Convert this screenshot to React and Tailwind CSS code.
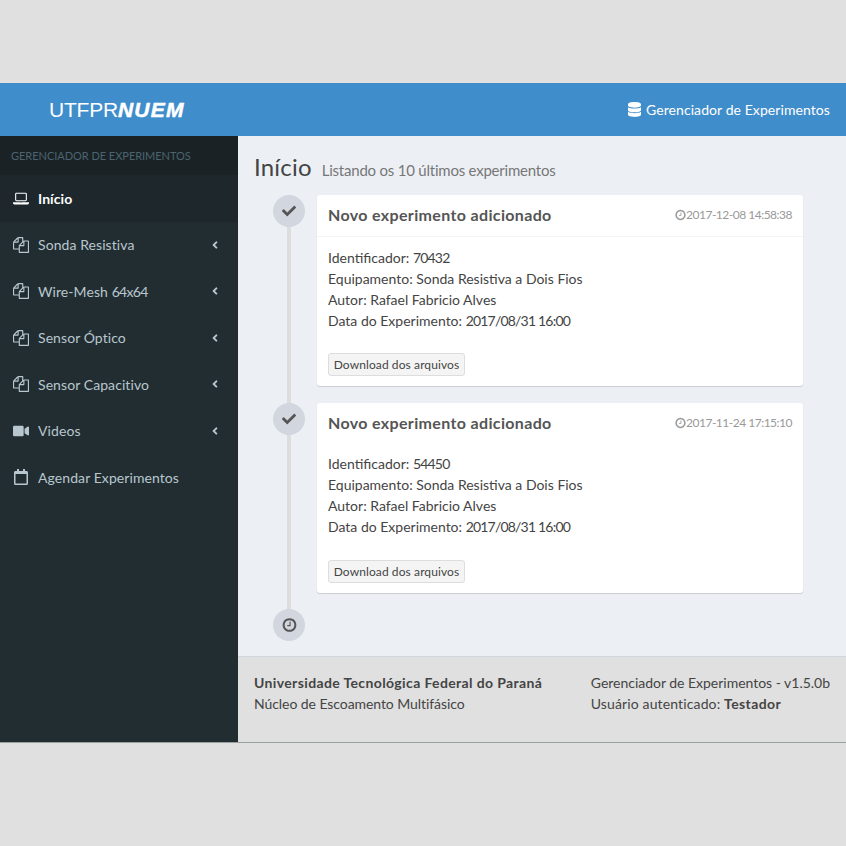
import React from "react";
import { FaVideo, FaRegCalendar, FaDatabase, FaCheck, FaAngleLeft } from "react-icons/fa";

const Files = ({ className }) => (
  <svg viewBox="0 0 1792 1792" fill="currentColor" className={className}>
    <path d="M1696 384q40 0 68 28t28 68v1216q0 40-28 68t-68 28h-960q-40 0-68-28t-28-68v-288h-544q-40 0-68-28t-28-68v-672q0-40 20-88t48-76l408-408q28-28 76-48t88-20h416q40 0 68 28t28 68v328q68-40 128-40h416zm-544 213l-299 299h299v-299zm-640-384l-299 299h299v-299zm196 647l316-316v-416h-384v416q0 40-28 68t-68 28h-416v640h512v-256q0-40 20-88t48-76zm956 804v-1152h-384v416q0 40-28 68t-68 28h-416v640h896z" />
  </svg>
);

const Laptop = ({ className }) => (
  <svg viewBox="0 0 1920 1792" fill="currentColor" className={className}>
    <path d="M416 1280q-66 0-113-47t-47-113v-704q0-66 47-113t113-47h1088q66 0 113 47t47 113v704q0 66-47 113t-113 47h-1088zm-32-864v704q0 13 9.5 22.5t22.5 9.5h1088q13 0 22.5-9.5t9.5-22.5v-704q0-13-9.5-22.5t-22.5-9.5h-1088q-13 0-22.5 9.5t-9.5 22.5zm1376 992h160v96q0 66-47 113t-113 47h-1600q-66 0-113-47t-47-113v-96h1760zm-720 96q16 0 16-16t-16-16h-160q-16 0-16 16t16 16h160z" />
  </svg>
);

const Clock = ({ className }) => (
  <svg viewBox="0 0 1536 1792" fill="currentColor" className={className}>
    <path d="M896 544v448q0 14-9 23t-23 9h-320q-14 0-23-9t-9-23v-64q0-14 9-23t23-9h224v-352q0-14 9-23t23-9h64q14 0 23 9t9 23zm416 352q0-148-73-273t-198-198-273-73-273 73-198 198-73 273 73 273 198 198 273 73 273-73 198-198 73-273zm224 0q0 209-103 385.5t-279.5 279.5-385.5 103-385.5-103-279.5-279.5-103-385.5 103-385.5 279.5-279.5 385.5-103 385.5 103 279.5 279.5 103 385.5z" />
  </svg>
);

function Item({ icon: Icon, label, num, active, arrow }) {
  return (
    <div className={`flex h-[46.5px] items-center pl-[13px] pr-[19px] ${active ? "bg-[#1e282c] text-white font-bold" : "text-[#b8c7ce]"}`}>
      <Icon className="w-[16px] h-[16px] shrink-0" />
      <span className="ml-[9px] text-[14px] tracking-[0.08px] flex-1">
        {label}
        {num && <span className="tracking-[-0.7px]">{num}</span>}
      </span>
      {arrow && <FaAngleLeft className="w-[8px] h-[12px]" />}
    </div>
  );
}

function Card({ date, id, first }) {
  return (
    <div className={`flex ${first ? "mb-[17px]" : "mb-[16px]"}`}>
      <div className="w-[32px] h-[32px] rounded-full bg-[#d2d6de] flex items-center justify-center text-[#555] shrink-0 z-10">
        <FaCheck className="w-[14px] h-[14px]" />
      </div>
      <div className="ml-[12px] w-[486px] bg-white rounded-[3px] shadow-[0_1px_1px_rgba(0,0,0,0.15)] text-[#444]">
        <div className={`flex items-center justify-between pl-[11px] pr-[11px] pb-[1px] ${first ? "h-[42px] border-b border-[#f4f4f4]" : "h-[40px]"}`}>
          <span className="text-[16px] font-bold text-[#555] tracking-[0.35px]">Novo experimento adicionado</span>
          <span className="flex items-center text-[12px] text-[#999] tracking-[-0.5px]">
            <Clock className="w-[11px] h-[12px]" />{date}
          </span>
        </div>
        <div className="pl-[11px] pt-[10px] text-[14px] leading-[21px] tracking-[0px]">
          <div>Identificador: <span className="tracking-[-0.8px]">{id}</span></div>
          <div>Equipamento: Sonda Resistiva a Dois Fios</div>
          <div>Autor: Rafael Fabricio Alves</div>
          <div>Data do Experimento: <span className="tracking-[-0.8px]">2017/08/31 16:00</span></div>
        </div>
        <div className={`pl-[11px] pb-[10px] ${first ? "pt-[22px]" : "pt-[23px]"}`}>
          <div className="w-[137px] h-[23px] rounded-[3px] bg-[#f4f4f4] border border-[#ddd] flex items-center justify-center text-[12px] text-[#444] tracking-[0.1px]">
            Download dos arquivos
          </div>
        </div>
      </div>
    </div>
  );
}

export default function App() {
  return (
    <div className="w-[846px] h-[846px] bg-[#e0e0e0] pt-[83px] font-['Lato',sans-serif] overflow-hidden">
      <div className="h-[53px] bg-[#408dcb] flex items-center justify-between pl-[49px] pr-[16px] text-white">
        <div className="flex items-baseline text-[21px] font-['Liberation_Sans',sans-serif] leading-none">
          <span className="tracking-[-0.2px]">UTFPR</span>
          <span className="font-bold italic tracking-[1.2px] [-webkit-text-stroke:0.5px_white]">NUEM</span>
        </div>
        <div className="flex items-center text-[14px]">
          <FaDatabase className="w-[13px] h-[15px] mr-[5px]" />
          <span className="tracking-[0.08px]">Gerenciador de Experimentos</span>
        </div>
      </div>
      <div className="flex h-[607px] border-b border-[#9aa0a0]">
        <aside className="w-[238px] bg-[#222d32] shrink-0">
          <div className="h-[39px] bg-[#1a2226] flex items-center pl-[11px] pt-[2px] text-[11px] tracking-[-0.03px] text-[#4b646f] uppercase">
            Gerenciador de Experimentos
          </div>
          <Item icon={Laptop} label="Início" active />
          <Item icon={Files} label="Sonda Resistiva" arrow />
          <Item icon={Files} label="Wire-Mesh " num="64x64" arrow />
          <Item icon={Files} label="Sensor Óptico" arrow />
          <Item icon={Files} label="Sensor Capacitivo" arrow />
          <Item icon={FaVideo} label="Videos" arrow />
          <Item icon={FaRegCalendar} label="Agendar Experimentos" />
        </aside>
        <div className="flex-1 flex flex-col min-w-0 bg-[#ecf0f5]">
          <main className="flex-1 pl-[16px]">
            <div className="flex items-baseline h-[59px] pt-[15px] text-[#444]">
              <span className="text-[24px] leading-[32px] tracking-[0.2px]">Início</span>
              <span className="ml-[10px] text-[15px] text-[#777] tracking-[-0.22px]">Listando os 10 últimos experimentos</span>
            </div>
            <div className="relative pl-[19px]">
              <div className="absolute left-[33px] top-0 bottom-[20px] w-[4px] bg-[#ddd]" />
              <Card first date="2017-12-08 14:58:38" id="70432" />
              <Card date="2017-11-24 17:15:10" id="54450" />
              <div className="relative w-[32px] h-[32px] rounded-full bg-[#d2d6de] flex items-center justify-center text-[#555]">
                <Clock className="w-[15px] h-[16px]" />
              </div>
            </div>
          </main>
          <footer className="h-[86px] bg-[#e0e0e0] border-t border-[#d2d6de] pt-[15px] pl-[16px] pr-[16px] flex justify-between text-[14px] leading-[21px] text-[#444]">
            <div>
              <div className="font-bold tracking-[0.37px]">Universidade Tecnológica Federal do Paraná</div>
              <div className="tracking-[-0.07px]">Núcleo de Escoamento Multifásico</div>
            </div>
            <div>
              <div className="tracking-[-0.02px]">Gerenciador de Experimentos - v1.5.0b</div>
              <div className="tracking-[0.13px]">Usuário autenticado: <b className="tracking-[0.4px]">Testador</b></div>
            </div>
          </footer>
        </div>
      </div>
    </div>
  );
}
